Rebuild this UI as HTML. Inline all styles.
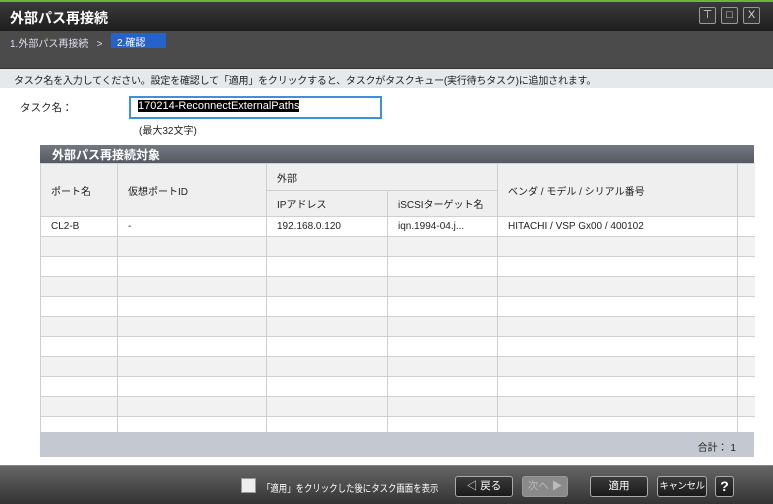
<!DOCTYPE html>
<html><head><meta charset="utf-8"><style>
*{margin:0;padding:0;box-sizing:border-box}
body{width:773px;height:504px;overflow:hidden;position:relative;background:#fff;font-family:"Liberation Sans","Noto Sans CJK JP",sans-serif;font-size:11px;color:#222}
.abs{position:absolute}
.title{left:0;top:0;width:773px;height:31px;background:linear-gradient(#3a3a3a,#1e1e1e);border-top:2px solid #6fb52c;color:#fff;font-size:14px;font-weight:bold;padding:6px 10px}
.wb{top:7px;width:17px;height:17px;border:1px solid #999;border-radius:2px;background:#333;color:#ddd;font-size:11px;text-align:center;line-height:15px}
.steps{left:0;top:31px;width:773px;height:38px;background:#4b4b4b;border-bottom:1px solid #333}
.instr{left:0;top:69px;width:773px;height:19px;background:#e6e8ea;padding:3px 14px;font-size:10px;letter-spacing:-0.2px}
.wrap{position:absolute;left:40px;top:163px;width:715px;height:270px;overflow:hidden}
table{border-collapse:collapse;width:715px;table-layout:fixed}
td{border:1px solid #cfcfcf;padding:0 10px;font-size:10px;height:20px;line-height:18px;white-space:nowrap;overflow:hidden}
th{border:1px solid #cfcfcf;background:#efefef;font-weight:normal;text-align:left;padding:0 10px;font-size:10px;white-space:nowrap;overflow:hidden}
tr.alt td{background:#f2f2f2}
.btn{top:476px;height:21px;border:1px solid #aaa;border-radius:3px;background:linear-gradient(#3a3a3a,#1a1a1a);color:#fff;text-align:center;line-height:19px;font-size:10.5px;white-space:nowrap}
</style></head><body>
<div class="abs title">外部パス再接続</div>
<div class="abs wb" style="left:699px">⊤</div>
<div class="abs wb" style="left:721px">□</div>
<div class="abs wb" style="left:743px">X</div>
<div class="abs steps"></div>
<div class="abs" style="left:10px;top:35px;color:#dde;font-size:10px">1.外部パス再接続 &nbsp;&nbsp;&gt;</div>
<div class="abs" style="left:111px;top:33px;width:55px;height:15px;background:#2563c9;color:#fff;font-size:10px;padding:1px 6px">2.確認</div>
<div class="abs instr">タスク名を入力してください。設定を確認して「適用」をクリックすると、タスクがタスクキュー(実行待ちタスク)に追加されます。</div>
<div class="abs" style="left:20px;top:100px;font-size:10.5px">タスク名：</div>
<div class="abs" style="left:129px;top:96px;width:253px;height:23px;border:2px solid #3d8fe0;padding:2px 7px"><span style="background:#000;color:#fff;font-size:11px">170214-ReconnectExternalPaths</span></div>
<div class="abs" style="left:139px;top:122px;font-size:10px">(最大32文字)</div>
<div class="abs" style="left:40px;top:145px;width:714px;height:18px;background:linear-gradient(#737880,#555a62);color:#fff;font-weight:bold;font-size:12px;padding:1px 12px">外部パス再接続対象</div>
<div class="wrap"><table>
<colgroup><col style="width:77px"><col style="width:149px"><col style="width:121px"><col style="width:110px"><col style="width:240px"><col style="width:18px"></colgroup>
<tr style="height:27px"><th rowspan="2">ポート名</th><th rowspan="2">仮想ポートID</th><th colspan="2">外部</th><th rowspan="2">ベンダ / モデル / シリアル番号</th><th rowspan="2"></th></tr>
<tr style="height:26px"><th>IPアドレス</th><th>iSCSIターゲット名</th></tr>
<tr><td>CL2-B</td><td>-</td><td>192.168.0.120</td><td>iqn.1994-04.j...</td><td>HITACHI / VSP Gx00 / 400102</td><td></td></tr>
<tr class="alt"><td></td><td></td><td></td><td></td><td></td><td></td></tr>
<tr><td></td><td></td><td></td><td></td><td></td><td></td></tr>
<tr class="alt"><td></td><td></td><td></td><td></td><td></td><td></td></tr>
<tr><td></td><td></td><td></td><td></td><td></td><td></td></tr>
<tr class="alt"><td></td><td></td><td></td><td></td><td></td><td></td></tr>
<tr><td></td><td></td><td></td><td></td><td></td><td></td></tr>
<tr class="alt"><td></td><td></td><td></td><td></td><td></td><td></td></tr>
<tr><td></td><td></td><td></td><td></td><td></td><td></td></tr>
<tr class="alt"><td></td><td></td><td></td><td></td><td></td><td></td></tr>
<tr><td></td><td></td><td></td><td></td><td></td><td></td></tr>
</table></div>
<div class="abs" style="left:40px;top:432px;width:714px;height:25px;background:#c4c8d0;text-align:right;padding:7px 18px 0 0;font-size:10px">合計： 1</div>
<div class="abs" style="left:0;top:465px;width:773px;height:39px;background:linear-gradient(#666,#333);border-top:1px solid #888"></div>
<div class="abs" style="left:241px;top:478px;width:15px;height:15px;background:#eee;border:1px solid #999"></div>
<div class="abs" style="left:262px;top:480px;color:#fff;font-size:10px;white-space:nowrap;transform:scaleX(0.84);transform-origin:left">「適用」をクリックした後にタスク画面を表示</div>
<div class="abs btn" style="left:455px;width:58px">◁ 戻る</div>
<div class="abs btn" style="left:522px;width:46px;background:#8a8a8a;color:#bbb;border-color:#999">次へ ▶</div>
<div class="abs btn" style="left:590px;width:58px">適用</div>
<div class="abs btn" style="left:657px;width:50px;font-size:9.5px;letter-spacing:-0.5px">キャンセル</div>
<div class="abs btn" style="left:715px;width:19px;font-weight:bold;font-size:14px">?</div>
</body></html>
